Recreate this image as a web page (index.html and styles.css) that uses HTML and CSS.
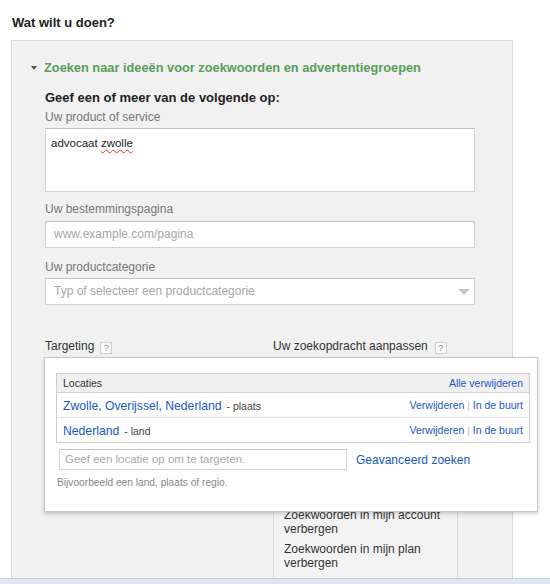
FILE: index.html
```html
<!DOCTYPE html>
<html lang="nl">
<head>
<meta charset="utf-8">
<title>Wat wilt u doen?</title>
<link rel="stylesheet" href="styles.css">
</head>
<body>
<div class="header">Wat wilt u doen?</div>
<div class="panel">
  <div class="section-title"><span class="caret"></span><span>Zoeken naar ideeën voor zoekwoorden en advertentiegroepen</span></div>
  <div class="intro">Geef een of meer van de volgende op:</div>
  <div class="label label-first">Uw product of service</div>
  <div class="textarea"><span>advocaat </span><span class="misspelled">zwolle</span></div>
  <div class="label label-dest">Uw bestemmingspagina</div>
  <div class="field">www.example.com/pagina</div>
  <div class="label label-cat">Uw productcategorie</div>
  <div class="field select"><span>Typ of selecteer een productcategorie</span><span class="select-arrow"></span></div>

  <div class="targeting">
    <div class="tlabels">
      <div class="tlabel-left">Targeting<span class="help">?</span></div>
      <div class="tlabel-right">Uw zoekopdracht aanpassen<span class="help">?</span></div>
    </div>
    <div class="tcols">
      <div class="tcol-left"></div>
      <div class="tcol-right">
        <div class="opt">Zoekwoorden in mijn account verbergen</div>
        <div class="opt">Zoekwoorden in mijn plan verbergen</div>
      </div>
    </div>

    <div class="popup">
      <div class="loc-table">
        <div class="loc-head"><span>Locaties</span><a class="link">Alle verwijderen</a></div>
        <div class="loc-row">
          <div><a class="link loc-name">Zwolle, Overijssel, Nederland</a><span class="loc-type">- plaats</span></div>
          <div class="loc-actions"><a class="link">Verwijderen</a><span class="sep">|</span><a class="link">In de buurt</a></div>
        </div>
        <div class="loc-row loc-row-last">
          <div><a class="link loc-name">Nederland</a><span class="loc-type">- land</span></div>
          <div class="loc-actions"><a class="link">Verwijderen</a><span class="sep">|</span><a class="link">In de buurt</a></div>
        </div>
      </div>
      <div class="loc-input-row">
        <div class="loc-input">Geef een locatie op om te targeten.</div>
        <a class="link adv">Geavanceerd zoeken</a>
      </div>
      <div class="hint">Bijvoorbeeld een land, plaats of regio.</div>
    </div>
  </div>
</div>
<div class="bottom-bar"></div>
</body>
</html>
```

FILE: styles.css
```css
html, body {
  margin: 0;
  padding: 0;
}
body {
  width: 550px;
  height: 584px;
  overflow: hidden;
  background: #fff;
  color: #222;
  font-family: "Liberation Sans", Arial, sans-serif;
}
.header {
  font-size: 13px;
  font-weight: bold;
  line-height: 16px;
  padding: 15px 0 0 12px;
  color: #222;
}
.panel {
  box-sizing: border-box;
  margin: 9px 0 0 11px;
  width: 502px;
  height: 538px;
  border: 1px solid #d9d9d9;
  border-bottom: 0;
  background: #f1f1f1;
  padding: 19px 0 0 33px;
  display: flex;
  flex-direction: column;
}
.section-title {
  display: flex;
  align-items: center;
  margin-left: -14px;
  font-size: 12.8px;
  font-weight: bold;
  line-height: 16px;
  color: #5a9e5a;
}
.caret {
  width: 0;
  height: 0;
  border-left: 3.5px solid transparent;
  border-right: 3.5px solid transparent;
  border-top: 4px solid #555;
  margin-right: 7px;
  margin-top: -1px;
}
.intro {
  margin-top: 14px;
  font-size: 13px;
  font-weight: bold;
  line-height: 16px;
  color: #222;
}
.label {
  font-size: 12px;
  line-height: 14px;
  color: #777;
}
.label-first { margin-top: 4px; }
.label-dest { margin-top: 10px; }
.label-cat { margin-top: 12px; }
.textarea {
  box-sizing: border-box;
  width: 430px;
  height: 64px;
  margin-top: 4px;
  background: #fff;
  border: 1px solid #d3d3d3;
  border-top-color: #c2c2c2;
  padding: 7px 5px;
  font-size: 11.5px;
  line-height: 14px;
  color: #222;
}
.misspelled {
  text-decoration: underline wavy #e03030;
  text-decoration-thickness: 1px;
  text-underline-offset: 2px;
}
.field {
  box-sizing: border-box;
  width: 430px;
  height: 27px;
  margin-top: 5px;
  background: #fff;
  border: 1px solid #d3d3d3;
  border-top-color: #c2c2c2;
  padding: 0 8px;
  font-size: 12px;
  line-height: 25px;
  color: #a6a6a6;
}
.select {
  margin-top: 4px;
  display: flex;
  justify-content: space-between;
  align-items: center;
  padding-right: 4px;
}
.select-arrow {
  width: 0;
  height: 0;
  border-left: 6.5px solid transparent;
  border-right: 6.5px solid transparent;
  border-top: 6px solid #c6c6c6;
}
.targeting {
  position: relative;
  flex: 1;
  display: flex;
  flex-direction: column;
  margin-top: 34px;
}
.tlabels {
  display: flex;
  font-size: 12px;
  line-height: 14px;
  color: #333;
}
.tlabel-left {
  width: 228px;
}
.help {
  display: inline-block;
  box-sizing: border-box;
  width: 12px;
  height: 12px;
  margin-left: 6px;
  border: 1px solid #cfcfcf;
  background: #f8f8f8;
  color: #909090;
  font-size: 9px;
  line-height: 10px;
  text-align: center;
  vertical-align: -1px;
}
.tlabel-right .help {
  margin-left: 7px;
}
.tcols {
  flex: 1;
  display: flex;
  margin-top: 4px;
}
.tcol-left {
  width: 228px;
}
.tcol-right {
  box-sizing: border-box;
  width: 185px;
  border-left: 1px solid #dcdcdc;
  border-right: 1px solid #dcdcdc;
  background: #f3f3f3;
  padding: 150px 10px 0 10px;
  font-size: 12px;
  line-height: 14px;
  color: #333;
}
.opt + .opt {
  margin-top: 6px;
}
.popup {
  position: absolute;
  top: 18px;
  left: -1px;
  box-sizing: border-box;
  width: 494px;
  height: 155px;
  background: #fff;
  border: 1px solid #c8c8c8;
  box-shadow: 0 2px 4px rgba(0, 0, 0, 0.18);
  padding: 15px 7px 0 11px;
}
.link {
  color: #2058bf;
  cursor: pointer;
}
.loc-table {
  border: 1px solid #cdcdcd;
}
.loc-head {
  height: 18px;
  background: #f0f0f0;
  border-bottom: 1px solid #d3d3d3;
  display: flex;
  justify-content: space-between;
  align-items: center;
  padding: 0 6px;
  font-size: 10.5px;
  color: #333;
}
.loc-row {
  height: 24px;
  display: flex;
  justify-content: space-between;
  align-items: center;
  padding: 0 6px;
  border-bottom: 1px solid #dcdcdc;
}
.loc-row-last {
  border-bottom: 0;
}
.loc-name {
  font-size: 12.2px;
}
.loc-type {
  margin-left: 5px;
  font-size: 10.5px;
  color: #444;
}
.loc-actions {
  font-size: 10.5px;
}
.sep {
  color: #b5b5b5;
  margin: 0 3px;
  font-size: 9px;
}
.loc-input-row {
  display: flex;
  align-items: center;
  margin: 6px 0 0 3px;
}
.loc-input {
  box-sizing: border-box;
  width: 288px;
  height: 21px;
  border: 1px solid #d3d3d3;
  border-top-color: #c4c4c4;
  padding-left: 5px;
  font-size: 11.5px;
  line-height: 19px;
  color: #a8a8a8;
}
.adv {
  margin-left: 9px;
  font-size: 12px;
}
.hint {
  margin: 6px 0 0 1px;
  font-size: 10.2px;
  line-height: 13px;
  color: #888;
}
.bottom-bar {
  box-sizing: border-box;
  height: 6px;
  border-top: 1px solid #c7d1dc;
  background: #dde8f5;
}
```
